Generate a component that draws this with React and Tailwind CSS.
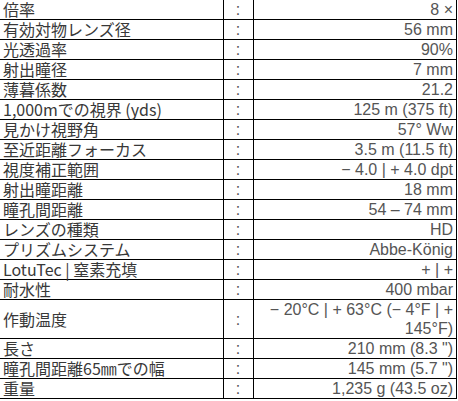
import React from "react";

const specs = [
  ["倍率", "8 ×"],
  ["有効対物レンズ径", "56 mm"],
  ["光透過率", "90%"],
  ["射出瞳径", "7 mm"],
  ["薄暮係数", "21.2"],
  ["1,000mでの視界 (yds)", "125 m (375 ft)"],
  ["見かけ視野角", "57° Ww"],
  ["至近距離フォーカス", "3.5 m (11.5 ft)"],
  ["視度補正範囲", "− 4.0 | + 4.0 dpt"],
  ["射出瞳距離", "18 mm"],
  ["瞳孔間距離", "54 – 74 mm"],
  ["レンズの種類", "HD"],
  ["プリズムシステム", "Abbe-König"],
  ["LotuTec | 窒素充填", "+ | +"],
  ["耐水性", "400 mbar"],
  ["作動温度", "− 20°C | + 63°C (− 4°F | + 145°F)"],
  ["長さ", "210 mm (8.3 \")"],
  ["瞳孔間距離65㎜での幅", "145 mm (5.7 \")"],
  ["重量", "1,235 g (43.5 oz)"],
];

const SpecRow = ({ label, value }) => (
  <tr>
    <td className="border-b border-r border-black pl-[3px] pr-1 py-0 align-middle text-[#383838] text-[16px] leading-[19px] font-['Noto_Sans_CJK_JP',sans-serif] whitespace-nowrap">
      {label}
    </td>
    <td className="border-b border-r border-black p-0 text-center align-middle text-[#555] text-[16px] leading-[19px] font-['Liberation_Sans',Arial,sans-serif]">
      :
    </td>
    <td className="border-b border-r border-black pl-2 pr-[3px] py-0 text-right align-middle text-[#555] text-[16px] leading-[19px] font-['Liberation_Sans',Arial,sans-serif]">
      {value}
    </td>
  </tr>
);

const App = () => {
  return (
    <div className="w-[458px] h-[401px] bg-white overflow-hidden">
      <table className="w-[457px] table-fixed border-collapse">
        <colgroup>
          <col className="w-[223px]" />
          <col className="w-[30px]" />
          <col />
        </colgroup>
        <tbody>
          {specs.map(([label, value]) => (
            <SpecRow key={label} label={label} value={value} />
          ))}
        </tbody>
      </table>
    </div>
  );
};

export default App;
